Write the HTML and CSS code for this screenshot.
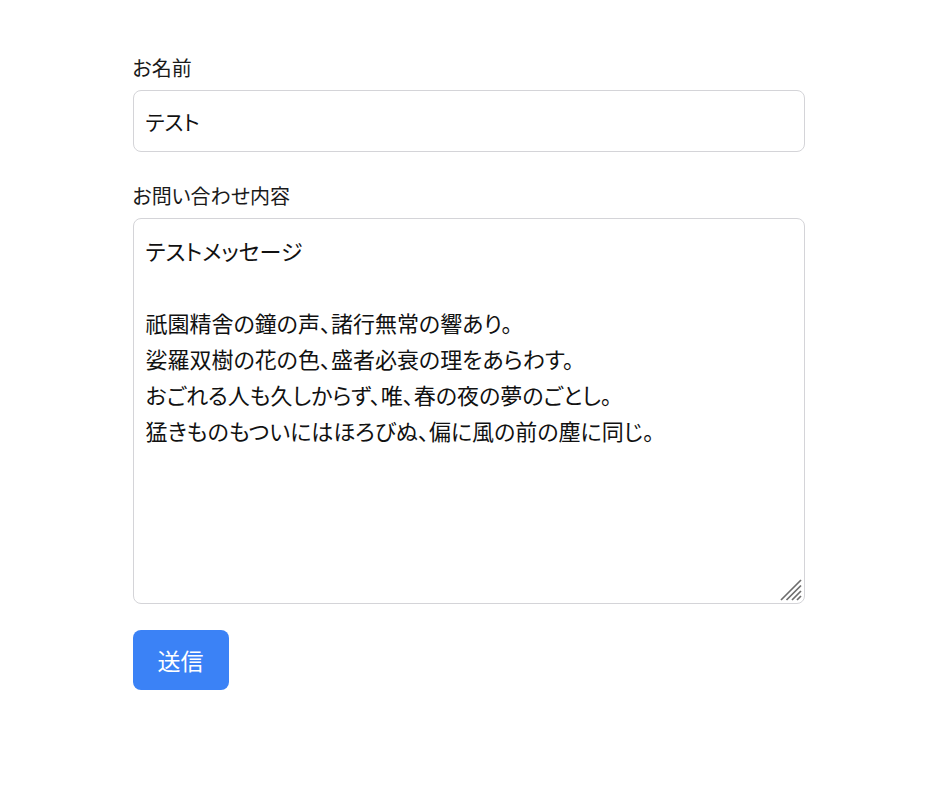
FILE: index.html
```html
<!DOCTYPE html>
<html lang="ja">
<head>
<meta charset="utf-8">
<title>お問い合わせ</title>
<link rel="stylesheet" href="styles.css">
</head>
<body>
<main class="page">
  <form class="form">
    <div class="field">
      <label class="label" for="name">お名前</label>
      <input class="input" id="name" type="text" value="テスト">
    </div>
    <div class="field">
      <label class="label" for="message">お問い合わせ内容</label>
      <div class="textarea-wrap">
        <textarea class="textarea" id="message">テストメッセージ

祇園精舎の鐘の声、諸行無常の響あり。
娑羅双樹の花の色、盛者必衰の理をあらわす。
おごれる人も久しからず、唯、春の夜の夢のごとし。
猛きものもついにはほろびぬ、偏に風の前の塵に同じ。</textarea>
        <svg class="grip" width="22" height="22" viewBox="0 0 22 22" aria-hidden="true">
          <line x1="1" y1="21" x2="21" y2="1"/>
          <line x1="6.5" y1="21" x2="21" y2="6.5"/>
          <line x1="12" y1="21" x2="21" y2="12"/>
          <line x1="17" y1="21" x2="21" y2="17"/>
        </svg>
      </div>
    </div>
    <button class="button" type="button">送信</button>
  </form>
</main>
</body>
</html>
```

FILE: styles.css
```css
html, body {
  margin: 0;
  padding: 0;
  background: #ffffff;
}

body {
  font-family: "Noto Sans CJK JP", "Noto Sans", sans-serif;
  color: #111111;
  font-feature-settings: "palt";
}

.page {
  width: 672px;
  margin: 0 auto;
  padding-top: 54px;
  padding-left: 1px;
}

.form {
  display: flex;
  flex-direction: column;
}

.field {
  display: flex;
  flex-direction: column;
  margin-bottom: 30px;
}

.field:last-of-type {
  margin-bottom: 26px;
}

.label {
  font-size: 20px;
  line-height: 28px;
  margin-bottom: 8px;
  color: #1a1a1a;
}

.input,
.textarea {
  box-sizing: border-box;
  width: 100%;
  border: 1px solid #d4d4d8;
  border-radius: 8px;
  padding: 0 12px;
  font-family: inherit;
  font-feature-settings: "palt";
  color: #111111;
  background: #ffffff;
  outline: none;
  margin: 0;
}

.input {
  height: 62px;
  font-size: 21px;
}

.textarea-wrap {
  position: relative;
  display: flex;
}

.textarea {
  display: block;
  height: 386px;
  padding-top: 13px;
  padding-bottom: 13px;
  font-size: 22px;
  line-height: 36px;
  resize: none;
}

.grip {
  position: absolute;
  right: 3px;
  bottom: 3px;
  pointer-events: none;
  stroke: #6e6e6e;
  stroke-width: 1.7;
}

.button {
  align-self: flex-start;
  width: 96px;
  height: 60px;
  padding: 0;
  border: none;
  border-radius: 8px;
  background: #3b82f6;
  color: #ffffff;
  font-family: inherit;
  font-size: 23px;
  cursor: pointer;
}
```
